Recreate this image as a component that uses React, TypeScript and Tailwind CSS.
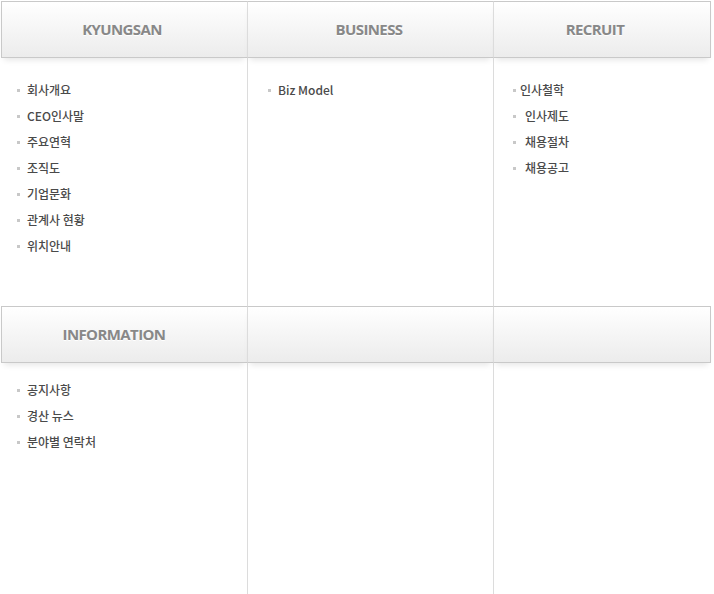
import React from 'react';

type Col = {
  title?: string;
  titlePad: string;
  listPad: string;
  gap: string;
  items: { label: string; indent?: boolean }[];
};

const rows: { bodyH: string; bodyPad: string; cols: Col[] }[] = [
  {
    bodyH: 'h-[248px]',
    bodyPad: 'pt-[19px]',
    cols: [
      {
        title: 'KYUNGSAN',
        titlePad: 'pr-[5px]',
        listPad: 'pl-[16px]',
        gap: 'gap-[7px]',
        items: ['회사개요', 'CEO인사말', '주요연혁', '조직도', '기업문화', '관계사 현황', '위치안내'].map((label) => ({ label })),
      },
      {
        title: 'BUSINESS',
        titlePad: 'pr-[3px]',
        listPad: 'pl-[20px]',
        gap: 'gap-[7px]',
        items: [{ label: 'Biz Model' }],
      },
      {
        title: 'RECRUIT',
        titlePad: 'pr-[14px]',
        listPad: 'pl-[19px]',
        gap: 'gap-[4px]',
        items: [
          { label: '인사철학' },
          { label: '인사제도', indent: true },
          { label: '채용절차', indent: true },
          { label: '채용공고', indent: true },
        ],
      },
    ],
  },
  {
    bodyH: 'h-[240px]',
    bodyPad: 'pt-[14px]',
    cols: [
      {
        title: 'INFORMATION',
        titlePad: 'pr-[21px]',
        listPad: 'pl-[16px]',
        gap: 'gap-[7px]',
        items: ['공지사항', '경산 뉴스', '분야별 연락처'].map((label) => ({ label })),
      },
      { titlePad: '', listPad: '', gap: '', items: [] },
      { titlePad: '', listPad: '', gap: '', items: [] },
    ],
  },
];

const widths = ['w-[246px]', 'w-[246px]', 'w-[218px]'];

export default function App() {
  return (
    <div className="w-[714px] h-[594px] overflow-hidden bg-white pt-px pl-px font-['Noto_Sans_CJK_KR','Noto_Sans',sans-serif]">
      {rows.map((row, r) => (
        <div key={r} className="flex">
          {row.cols.map((col, c) => (
            <div key={c} className={`${widths[c]} flex flex-col ${c > 0 ? 'border-l border-[#dcdcdc]' : ''}`}>
              <div
                className={`h-[57px] flex items-center justify-center border-y border-[#c9c9c9] bg-gradient-to-b from-white to-[#ececec] shadow-[0_5px_6px_-3px_rgba(0,0,0,0.1)] ${
                  c === 0 ? 'border-l' : '-ml-px border-l border-l-[#dcdcdc]'
                } ${c === 2 ? 'border-r' : ''} ${col.titlePad}`}
              >
                {col.title && (
                  <span className="font-['Open_Sans',sans-serif] text-[15px] font-bold tracking-[-0.6px] text-[#888] [text-shadow:0_1px_0_#fff]">
                    {col.title}
                  </span>
                )}
              </div>
              <ul className={`${row.bodyH} ${row.bodyPad} ${col.listPad}`}>
                {col.items.map((it) => (
                  <li key={it.label} className={`flex items-center h-[26px] ${col.gap} text-[12px] font-medium text-[#4a4a4a]`}>
                    <span className="w-[3px] h-[3px] bg-[#c8c8c8] shrink-0" />
                    <span className={it.indent ? 'pl-[5px]' : ''}>{it.label}</span>
                  </li>
                ))}
              </ul>
            </div>
          ))}
        </div>
      ))}
    </div>
  );
}
